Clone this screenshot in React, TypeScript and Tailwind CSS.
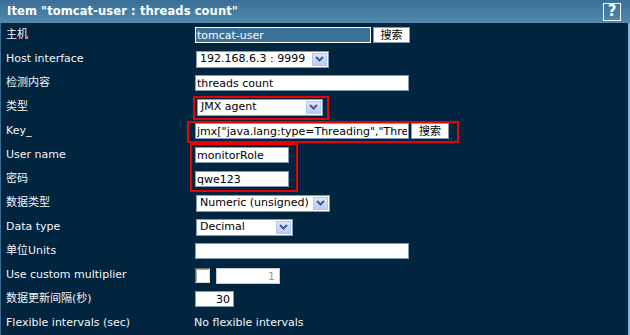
import React from 'react';

const font = "font-['DejaVu_Sans','Noto_Sans_CJK_SC',sans-serif]";

const Chevron = () => (
  <span className="flex h-[13px] w-[15px] items-center justify-center border border-[#b3c6f0] bg-gradient-to-b from-[#dde7fe] to-[#b8ccf8]">
    <svg width="11" height="8" viewBox="0 0 11 8">
      <path d="M2 2 L5.5 5.5 L9 2" fill="none" stroke="#4b5e84" strokeWidth="2.2" />
    </svg>
  </span>
);

const Select = ({ value, width }: { value: string; width: string }) => (
  <div className={`flex h-[17px] items-center justify-between border border-[#7f9db9] bg-white pl-[3px] pr-px text-[11px] text-black ${width}`}>
    <span className="whitespace-nowrap">{value}</span>
    <Chevron />
  </div>
);

const TextInput = ({ value = '', width, className = '' }: { value?: string; width: string; className?: string }) => (
  <input
    readOnly
    value={value}
    className={`h-[16px] border border-[#7f9db9] bg-white px-px text-[11px] leading-none text-black outline-none ${width} ${className}`}
  />
);

const SearchButton = ({ width }: { width: string }) => (
  <button className={`ml-[2px] flex h-[16px] items-center justify-center border border-[#7f9db9] bg-white text-[11px] leading-none text-black ${width}`}>
    搜索
  </button>
);

const Row = ({ label, children }: { label: string; children?: React.ReactNode }) => (
  <div className="flex h-[24px] items-center">
    <div className="w-[189px] shrink-0 whitespace-nowrap text-[11px] text-[#f2f4f6]">{label}</div>
    <div className="flex items-center">{children}</div>
  </div>
);

export default function App() {
  return (
    <div className={`h-[335px] w-[630px] overflow-hidden bg-[#01243f] ${font}`}>
      {/* Header */}
      <div className="flex h-[23px] items-center justify-between bg-gradient-to-b from-[#3b6f97] to-[#5189ae] pl-[7px] pr-[9px]">
        <h1 className="pt-px text-[11.5px] font-bold tracking-[0.1px] text-white">Item "tomcat-user : threads count"</h1>
        <div className="flex h-[18px] w-[18px] items-center justify-center border border-white text-[15px] font-bold leading-none text-white">
          ?
        </div>
      </div>

      {/* Body */}
      <div className="relative h-[312px] border-l border-r-2 border-l-[#3b6e95] border-r-[#7bb4df] pl-[5px]">
        <Row label="主机">
          <input
            readOnly
            value="tomcat-user"
            className="h-[16px] w-[176px] border border-white bg-[#3b7199] px-px text-[11px] leading-none text-white outline-none"
          />
          <SearchButton width="w-[37px]" />
        </Row>
        <Row label="Host interface">
          <div className="ml-px">
            <Select value="192.168.6.3 : 9999" width="w-[133px]" />
          </div>
        </Row>
        <Row label="检测内容">
          <TextInput value="threads count" width="w-[214px]" />
        </Row>
        <Row label="类型">
          <div className="ml-[2px]">
            <Select value="JMX agent" width="w-[126px]" />
          </div>
        </Row>
        <Row label="Key_">
          <TextInput value={'jmx["java.lang:type=Threading","ThreadCount"]'} width="w-[214px]" />
          <SearchButton width="w-[38px]" />
        </Row>
        <Row label="User name">
          <TextInput value="monitorRole" width="w-[94px]" />
        </Row>
        <Row label="密码">
          <TextInput value="qwe123" width="w-[94px]" />
        </Row>
        <Row label="数据类型">
          <div className="ml-px">
            <Select value="Numeric (unsigned)" width="w-[134px]" />
          </div>
        </Row>
        <Row label="Data type">
          <div className="ml-px">
            <Select value="Decimal" width="w-[97px]" />
          </div>
        </Row>
        <Row label="单位Units">
          <TextInput width="w-[214px]" />
        </Row>
        <Row label="Use custom multiplier">
          <span className="h-[15px] w-[15px] border border-t-[#716f64] border-l-[#716f64] border-r-[#dcdad0] border-b-[#dcdad0] bg-white shadow-[inset_1px_1px_0_#aca899]" />
          <input
            readOnly
            value="1"
            className="ml-[6px] mt-[2px] h-[16px] w-[64px] border border-[#c2cbd3] bg-white px-[4px] text-right text-[11px] leading-none text-[#a4978a] outline-none"
          />
        </Row>
        <Row label="数据更新间隔(秒)">
          <TextInput value="30" width="w-[39px]" className="text-right pr-[3px]" />
        </Row>
        <Row label="Flexible intervals (sec)">
          <span className="-ml-px text-[11px] text-[#f2f4f6]">No flexible intervals</span>
        </Row>

        {/* annotation boxes */}
        <div className="absolute left-[192px] top-[73px] h-[24px] w-[136px] border-2 border-[#ee0000]" />
        <div className="absolute left-[186px] top-[98px] h-[22px] w-[272px] border-2 border-[#ee0000]" />
        <div className="absolute left-[189px] top-[120px] h-[49px] w-[108px] border-2 border-[#ee0000]" />
      </div>
    </div>
  );
}
